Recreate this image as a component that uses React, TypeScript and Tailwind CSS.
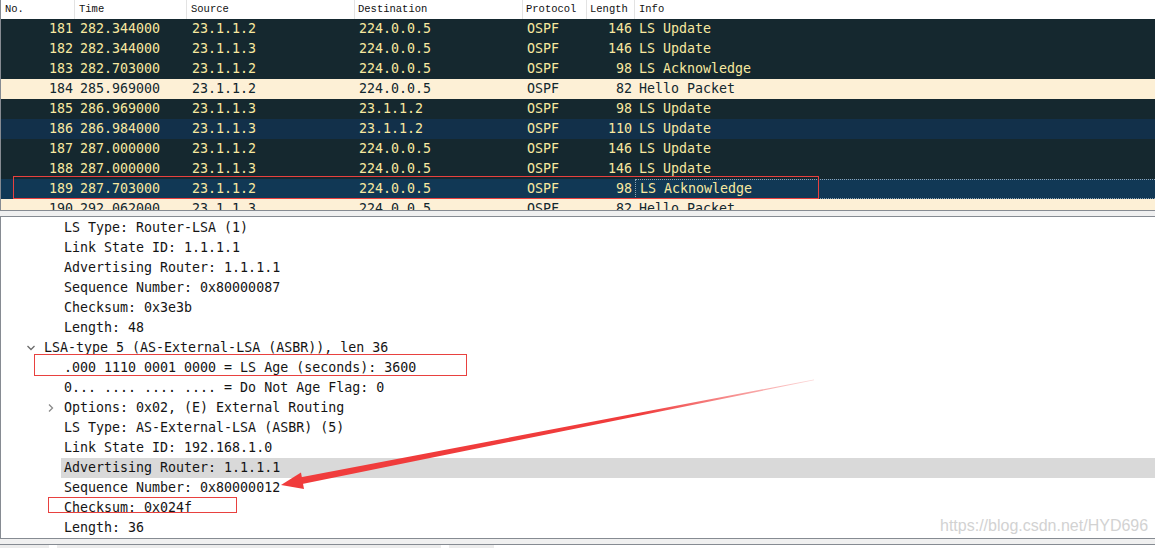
import React from "react";

type Row = {
  no: string;
  time: string;
  src: string;
  dst: string;
  proto: string;
  len: string;
  info: string;
  kind: "dark" | "cream" | "blue" | "sel";
};

const rows: Row[] = [
  { no: "181", time: "282.344000", src: "23.1.1.2", dst: "224.0.0.5", proto: "OSPF", len: "146", info: "LS Update", kind: "dark" },
  { no: "182", time: "282.344000", src: "23.1.1.3", dst: "224.0.0.5", proto: "OSPF", len: "146", info: "LS Update", kind: "dark" },
  { no: "183", time: "282.703000", src: "23.1.1.2", dst: "224.0.0.5", proto: "OSPF", len: "98", info: "LS Acknowledge", kind: "dark" },
  { no: "184", time: "285.969000", src: "23.1.1.2", dst: "224.0.0.5", proto: "OSPF", len: "82", info: "Hello Packet", kind: "cream" },
  { no: "185", time: "286.969000", src: "23.1.1.3", dst: "23.1.1.2", proto: "OSPF", len: "98", info: "LS Update", kind: "dark" },
  { no: "186", time: "286.984000", src: "23.1.1.3", dst: "23.1.1.2", proto: "OSPF", len: "110", info: "LS Update", kind: "blue" },
  { no: "187", time: "287.000000", src: "23.1.1.2", dst: "224.0.0.5", proto: "OSPF", len: "146", info: "LS Update", kind: "dark" },
  { no: "188", time: "287.000000", src: "23.1.1.3", dst: "224.0.0.5", proto: "OSPF", len: "146", info: "LS Update", kind: "dark" },
  { no: "189", time: "287.703000", src: "23.1.1.2", dst: "224.0.0.5", proto: "OSPF", len: "98", info: "LS Acknowledge", kind: "sel" },
  { no: "190", time: "292.062000", src: "23.1.1.3", dst: "224.0.0.5", proto: "OSPF", len: "82", info: "Hello Packet", kind: "cream" },
];

const rowCls: Record<Row["kind"], string> = {
  dark: "bg-[#15282f] text-[#f8e8a0]",
  cream: "bg-[#fdf0d6] text-[#12272e]",
  blue: "bg-[#12304a] text-[#f8e8a0]",
  sel: "bg-[#113855] text-[#f8e8a0]",
};

const mono = { fontFamily: '"DejaVu Sans Mono", "Liberation Mono", monospace' };

function Chevron({ down }: { down: boolean }) {
  return down ? (
    <svg width="10" height="8" viewBox="0 0 10 8" className="block">
      <path d="M1.5 2 L5 5.5 L8.5 2" fill="none" stroke="#6b6b6b" strokeWidth="1.3" />
    </svg>
  ) : (
    <svg width="8" height="10" viewBox="0 0 8 10" className="block">
      <path d="M2 1.5 L5.5 5 L2 8.5" fill="none" stroke="#8a8a8a" strokeWidth="1.3" />
    </svg>
  );
}

type Line = { text: string; indent: number; chevron?: "down" | "right"; hl?: boolean };

const lines: Line[] = [
  { text: "LS Type: Router-LSA (1)", indent: 64 },
  { text: "Link State ID: 1.1.1.1", indent: 64 },
  { text: "Advertising Router: 1.1.1.1", indent: 64 },
  { text: "Sequence Number: 0x80000087", indent: 64 },
  { text: "Checksum: 0x3e3b", indent: 64 },
  { text: "Length: 48", indent: 64 },
  { text: "LSA-type 5 (AS-External-LSA (ASBR)), len 36", indent: 44, chevron: "down" },
  { text: ".000 1110 0001 0000 = LS Age (seconds): 3600", indent: 64 },
  { text: "0... .... .... .... = Do Not Age Flag: 0", indent: 64 },
  { text: "Options: 0x02, (E) External Routing", indent: 64, chevron: "right" },
  { text: "LS Type: AS-External-LSA (ASBR) (5)", indent: 64 },
  { text: "Link State ID: 192.168.1.0", indent: 64 },
  { text: "Advertising Router: 1.1.1.1", indent: 64, hl: true },
  { text: "Sequence Number: 0x80000012", indent: 64 },
  { text: "Checksum: 0x024f", indent: 64 },
  { text: "Length: 36", indent: 64 },
];

export default function App() {
  return (
    <div className="relative w-[1155px] h-[548px] overflow-hidden bg-[#f0f0f0] flex flex-col">
      {/* Packet list pane */}
      <div className="h-[211px] shrink-0 bg-white border-l border-b border-[#868b92] overflow-hidden">
        <div
          className="h-[19px] flex items-center text-[10.5px] text-[#111] bg-white"
          style={{ fontFamily: '"Liberation Mono", monospace' }}
        >
          <div className="w-[74px] h-full flex items-center pl-[4px] border-r border-[#e3e3e3]">No.</div>
          <div className="w-[112px] h-full flex items-center pl-[4px] border-r border-[#e3e3e3]">Time</div>
          <div className="w-[168px] h-full flex items-center pl-[4px] border-r border-[#e3e3e3]">Source</div>
          <div className="w-[168px] h-full flex items-center pl-[3px] border-r border-[#e3e3e3]">Destination</div>
          <div className="w-[64px] h-full flex items-center pl-[3px] border-r border-[#e3e3e3]">Protocol</div>
          <div className="w-[48px] h-full flex items-center pl-[3px] border-r border-[#e3e3e3]">Length</div>
          <div className="flex-1 h-full flex items-center pl-[4px]">Info</div>
        </div>
        {rows.map((r) => (
          <div
            key={r.no}
            className={`h-[20px] flex items-center text-[13.3px] whitespace-pre ${rowCls[r.kind]}`}
            style={mono}
          >
            <div className="w-[75px] text-right pr-[3px]">{r.no}</div>
            <div className="w-[111px] pl-[4px]">{r.time}</div>
            <div className="w-[168px] pl-[5px]">{r.src}</div>
            <div className="w-[169px] pl-[4px]">{r.dst}</div>
            <div className="w-[63px] pl-[3px]">{r.proto}</div>
            <div className="w-[48px] text-right pr-[3px]">{r.len}</div>
            <div
              className={`flex-1 h-full flex items-center pl-[4px] ${
                r.kind === "sel" ? "border-l border-t border-b border-dotted border-[#8fa4b4]" : ""
              }`}
            >
              {r.info}
            </div>
          </div>
        ))}
      </div>

      <div className="h-[5px] shrink-0" />

      {/* Details pane */}
      <div className="h-[323px] shrink-0 pt-[1px] bg-white border-l border-t border-b border-[#868b92] overflow-hidden">
        {lines.map((l, i) => (
          <div
            key={i}
            className="relative h-[20px] flex items-center text-[13.3px] text-[#141414] whitespace-pre"
            style={mono}
          >
            {l.chevron === "down" && (
              <div className="absolute left-[25px] top-[6px]">
                <Chevron down />
              </div>
            )}
            {l.chevron === "right" && (
              <div className="absolute left-[46px] top-[5px]">
                <Chevron down={false} />
              </div>
            )}
            {l.hl ? (
              <div className="ml-[60px] flex-1 h-full flex items-center pl-[3px] bg-[#d9d9d9]">{l.text}</div>
            ) : (
              <div style={{ paddingLeft: l.indent - 1 }}>{l.text}</div>
            )}
          </div>
        ))}
      </div>

      <div className="h-[5px] shrink-0" />
      <div className="flex-1 border-t border-[#868b92] bg-[#ececec] flex">
        <div className="w-[49px]" />
        <div className="w-[8px] bg-white" />
        <div className="w-[384px]" />
        <div className="w-[8px] bg-white" />
        <div className="w-[45px]" />
        <div className="flex-1 bg-white" />
      </div>

      {/* Watermark */}
      <div
        className="absolute left-[940px] top-[516px] text-[16px] leading-[20px] text-[#d2d2d2]"
        style={{ fontFamily: '"Liberation Sans", Arial, sans-serif' }}
      >
        https://blog.csdn.net/HYD696
      </div>

      {/* Annotations */}
      <div className="absolute left-[13px] top-[176px] w-[806px] h-[23px] border border-[#e8413f]" />
      <div className="absolute left-[34px] top-[354px] w-[433px] h-[22px] border border-[#e8413f]" />
      <div className="absolute left-[48px] top-[497px] w-[189px] h-[16px] border border-[#e8413f]" />

      <svg className="absolute left-0 top-0 pointer-events-none" width="1155" height="548" viewBox="0 0 1155 548">
        <defs>
          <linearGradient id="fade" x1="813" y1="380" x2="640" y2="414" gradientUnits="userSpaceOnUse">
            <stop offset="0" stopColor="#f03c3c" stopOpacity="0.2" />
            <stop offset="1" stopColor="#f03c3c" stopOpacity="1" />
          </linearGradient>
        </defs>
        <polygon points="814,379.6 814,380.3 301,484.2 299.6,477.4" fill="url(#fade)" />
        <polygon points="281,485 304,489 301,472.4" fill="#f03c3c" />
      </svg>
    </div>
  );
}
